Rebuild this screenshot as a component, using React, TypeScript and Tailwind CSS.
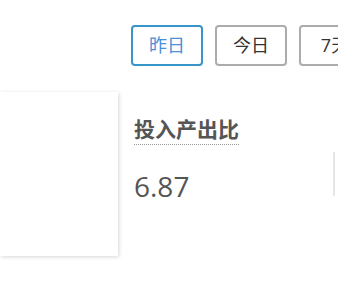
export default function App() {
  const ranges = [
    { label: "昨日", active: true },
    { label: "今日", active: false },
    { label: "7天", active: false },
  ];

  return (
    <div className="w-[338px] h-[301px] overflow-hidden bg-white" style={{ fontFamily: '"Open Sans", "Noto Sans CJK SC", sans-serif' }}>
      <div className="flex gap-[12px] pl-[131px] pt-[25px]">
        {ranges.map((r) => (
          <button
            key={r.label}
            type="button"
            className={
              r.active
                ? "shrink-0 w-[72px] h-[41px] rounded-[4px] border-2 border-[#3895c9] text-[#4a8fd8] text-[18px]"
                : "shrink-0 w-[72px] h-[41px] rounded-[4px] border-2 border-[#acacac] text-[#333] text-[18px]"
            }
          >
            {r.label}
          </button>
        ))}
      </div>

      <div className="flex mt-[26px]">
        {/* chart card, cut off at the left edge */}
        <div className="shrink-0 w-[118px] h-[164px] bg-white shadow-[1px_1px_4px_rgba(0,0,0,0.16)]" />

        <div className="ml-[16px] pt-[24px] flex">
          <div className="w-[199px]">
            <div className="inline-block text-[21px] font-bold text-[#555] leading-[26px] pb-[2px] border-b border-dotted border-[#999]">
              投入产出比
            </div>
            <div className="mt-[24px] text-[28px] text-[#555] leading-[34px]">6.87</div>
          </div>
          <div className="shrink-0 w-[2px] h-[44px] mt-[36px] bg-[#e6e6e6]" />
        </div>
      </div>
    </div>
  );
}
